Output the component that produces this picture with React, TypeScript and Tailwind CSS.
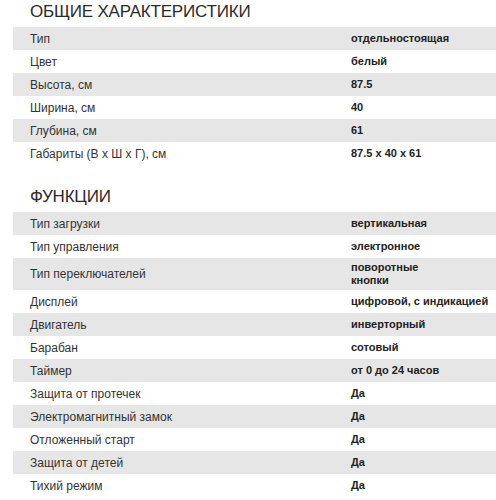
import React from 'react';

type Row = { label: string; value: React.ReactNode; tall?: boolean };

const general: Row[] = [
    { label: 'Тип', value: 'отдельностоящая' },
    { label: 'Цвет', value: 'белый' },
    { label: 'Высота, см', value: '87.5' },
    { label: 'Ширина, см', value: '40' },
    { label: 'Глубина, см', value: '61' },
    { label: 'Габариты (В х Ш х Г), см', value: '87.5 x 40 x 61' },
];

const functions: Row[] = [
    { label: 'Тип загрузки', value: 'вертикальная' },
    { label: 'Тип управления', value: 'электронное' },
    { label: 'Тип переключателей', value: <>поворотные<br />кнопки</>, tall: true },
    { label: 'Дисплей', value: 'цифровой, с индикацией' },
    { label: 'Двигатель', value: 'инверторный' },
    { label: 'Барабан', value: 'сотовый' },
    { label: 'Таймер', value: 'от 0 до 24 часов' },
    { label: 'Защита от протечек', value: 'Да' },
    { label: 'Электромагнитный замок', value: 'Да' },
    { label: 'Отложенный старт', value: 'Да' },
    { label: 'Защита от детей', value: 'Да' },
    { label: 'Тихий режим', value: 'Да' },
];

const SpecTable: React.FC<{ rows: Row[] }> = ({ rows }) => (
    <div className="flex flex-col">
        {rows.map((row, i) => (
            <div
                key={row.label}
                className={`flex items-center ${row.tall ? 'h-[32px]' : 'h-[23px]'} ${i % 2 === 0 ? 'bg-[#e6e6e6]' : 'bg-white'}`}
            >
                <div className="w-[338px] pl-[17px] text-[12px] text-[#333333]">{row.label}</div>
                <div className="flex-1 text-[11px] font-bold leading-[13px] text-[#222222] whitespace-nowrap">{row.value}</div>
            </div>
        ))}
    </div>
);

const Heading: React.FC<{ children: React.ReactNode }> = ({ children }) => (
    <div className="h-[27px] pl-[17px] flex items-center pb-[3px] text-[17px] text-[#2b2b2b] tracking-[-0.2px]">
        {children}
    </div>
);

export default function App() {
    return (
        <div className="w-[496px] h-[500px] overflow-hidden bg-white pl-[13px]" style={{ fontFamily: '"Liberation Sans", Arial, sans-serif' }}>
            <Heading>ОБЩИЕ ХАРАКТЕРИСТИКИ</Heading>
            <SpecTable rows={general} />
            <div className="mt-[20px]">
                <Heading>ФУНКЦИИ</Heading>
            </div>
            <SpecTable rows={functions} />
        </div>
    );
}
